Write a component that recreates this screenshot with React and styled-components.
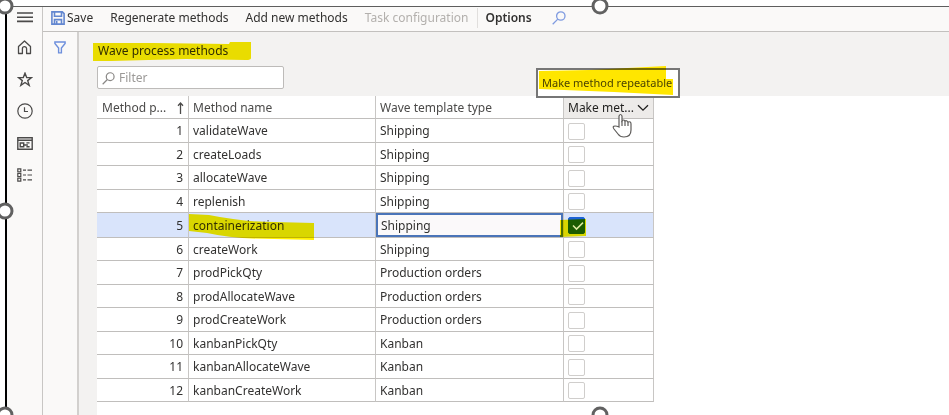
import React from "react";
import styled, { createGlobalStyle, css } from "styled-components";

const GlobalStyle = createGlobalStyle`
  *, *::before, *::after { box-sizing: border-box; }
  body {
    margin: 0;
    background: #fff;
    color: #323130;
    font-family: "Noto Sans", "Open Sans", sans-serif;
    font-size: 12px;
    line-height: 16px;
    overflow: hidden;
  }
  button, input { font: inherit; color: inherit; }
`;

const Page = styled.div`
  position: relative;
  display: flex;
  min-height: 100vh;
  padding: 6px 0 0 5px;
`;

const Window = styled.div`
  display: flex;
  flex: 1;
  min-width: 0;
  border-top: 1px solid #5e5e5e;
  border-left: 2px solid #000;
  background: #faf9f8;
`;

const IconButton = styled.button`
  display: flex;
  align-items: center;
  justify-content: center;
  width: 20px;
  height: 20px;
  padding: 0;
  border: 0;
  background: none;
  color: ${(p) => p.$color || "#4b4a49"};
`;

const NavRail = styled.nav`
  display: flex;
  flex-direction: column;
  align-items: center;
  gap: 12px;
  width: 36px;
  border-right: 1px solid #c8c6c4;

  button:first-child { margin-bottom: -2px; }
`;

const Workspace = styled.div`
  display: flex;
  flex: 1;
  flex-direction: column;
  min-width: 0;
`;

const Toolbar = styled.header`
  display: flex;
  align-items: center;
  gap: 17px;
  height: 25px;
  padding: 0 8px 2px;
  border-bottom: 1px solid #c2c0be;
`;

const ToolButton = styled.button`
  display: flex;
  align-items: center;
  gap: 2px;
  padding: 0;
  border: 0;
  background: none;
  white-space: nowrap;
  color: #323130;
  font-weight: ${(p) => (p.$strong ? 600 : 400)};

  &:disabled { color: #b3b0ad; }
`;

const OptionsGroup = styled.div`
  display: flex;
  align-items: center;
  gap: 17px;
  margin-left: -8px;
  padding-left: 7px;
  border-left: 1px solid #e1dfdd;
`;

const Body = styled.div`
  display: flex;
  flex: 1;
`;

const FilterRail = styled.aside`
  display: flex;
  justify-content: center;
  align-items: flex-start;
  width: 36px;
  padding-top: 5px;
  border-right: 2px solid #d2d0ce;
`;

const Main = styled.main`
  display: flex;
  flex: 1;
  flex-direction: column;
  min-width: 0;
  padding-left: 18px;
  background: #f3f2f1;
`;

const Heading = styled.div`
  display: flex;
  flex-direction: column;
  align-items: flex-start;
  gap: 7px;
  height: 64px;
  padding-top: 11px;
`;

const Title = styled.h1`
  position: relative;
  margin: 0;
  padding-left: 1px;
  font-size: 12px;
  font-weight: 400;
  line-height: 16px;
`;

const SearchField = styled.label`
  display: flex;
  align-items: center;
  gap: 4px;
  width: 187px;
  height: 23px;
  padding: 1px 4px 0;
  border: 1px solid #bdbbb9;
  border-radius: 2px;
  background: #fff;
  color: #8a8886;

  input {
    flex: 1;
    min-width: 0;
    padding: 0;
    border: 0;
    outline: 0;
    background: none;
  }
  input::placeholder { color: #9b9997; opacity: 1; }
`;

const GridArea = styled.section`
  flex: 1;
  background: #fff;
`;

const Table = styled.table`
  width: 557px;
  table-layout: fixed;
  border-collapse: separate;
  border-spacing: 0;
`;

const Col = styled.col`
  width: ${(p) => p.$width}px;
`;

const cell = css`
  position: relative;
  padding: 1px 4px 0;
  border-right: 1px solid #c8c6c4;
  border-bottom: 1px solid #c0bebc;
  text-align: left;
  font-weight: 400;
  white-space: nowrap;
`;

const HeadCell = styled.th`
  ${cell}
  height: 23px;
  padding-left: ${(p) => (p.$inset ? 5 : 4)}px;
  background: ${(p) => (p.$active ? "#edebe9" : "#fff")};
  color: ${(p) => (p.$active ? "#201f1e" : "#4b4a49")};
`;

const HeadLabel = styled.div`
  display: flex;
  align-items: center;
  justify-content: space-between;
`;

const Row = styled.tr`
  height: 24px;
  background: ${(p) => (p.$selected ? "#d9e4fb" : "#fff")};
  &:nth-child(even) { height: 23px; }
  ${(p) => p.$selected && "&& { height: 25px; }"}
`;

const Cell = styled.td`
  ${cell}
  text-align: ${(p) => p.$align || "left"};
  ${(p) => p.$align === "right" && "padding-right: 5px;"}
  ${(p) =>
    p.$focused &&
    css`
      padding-left: 5px;
      background: #fbf9fa;
      box-shadow: inset 0 0 0 2px #4a74b8;
    `}
`;

const Check = styled.input`
  display: block;
  appearance: none;
  width: 17px;
  height: 17px;
  margin: 0;
  border: 1px solid #d0cecc;
  border-radius: 2px;
  background: #fff;

  &:checked {
    border-color: #1c62d6;
    background: #1c62d6;
  }
`;

const CheckMark = styled.svg`
  position: absolute;
  z-index: 3;
  left: 8px;
  top: 8px;
  pointer-events: none;
`;

const Marker = styled.svg`
  position: absolute;
  z-index: 2;
  left: ${(p) => p.$left}px;
  top: ${(p) => p.$top}px;
  mix-blend-mode: multiply;
  pointer-events: none;
`;

const Tooltip = styled.div`
  position: absolute;
  z-index: 4;
  left: -28px;
  bottom: 20px;
  padding: 5px 6px 5px 4px;
  border: 2px solid #767676;
  background: #fff;
  color: #4b4a49;
  font-size: 11px;
  line-height: 16px;
  isolation: isolate;
`;

const Cursor = styled.svg`
  position: absolute;
  z-index: 5;
  left: 48px;
  top: 17px;
`;

const Handle = styled.span`
  position: absolute;
  z-index: 6;
  left: ${(p) => p.$x};
  top: ${(p) => p.$y};
  width: 17px;
  height: 17px;
  border: 3px solid #616161;
  border-radius: 50%;
  background: #fff;
  transform: translate(-50%, -50%);
`;

const stroke = { fill: "none", stroke: "currentColor", strokeWidth: 1.2 };

const MenuIcon = () => (
  <svg width="16" height="12" viewBox="0 0 16 12" {...stroke} strokeWidth="1.6">
    <path d="M0 2h16M0 6.2h16M0 10.4h16" />
  </svg>
);
const HomeIcon = () => (
  <svg width="15" height="15" viewBox="0 0 15 15" {...stroke} strokeWidth="1.3">
    <path d="M1.5 6.6 7.5 1l6 5.6v6.9H9.6V8.8a2.1 2.1 0 0 0-4.2 0v4.7H1.5z" strokeLinejoin="round" />
  </svg>
);
const StarIcon = () => (
  <svg width="16" height="15" viewBox="0 0 16 15" {...stroke} strokeWidth="1.4">
    <path d="m8 1.2 1.7 4.4h4.8l-3.8 3 1.5 4.8L8 10.5l-4.2 2.9 1.5-4.8-3.8-3h4.8z" />
  </svg>
);
const ClockIcon = () => (
  <svg width="16" height="16" viewBox="0 0 16 16" {...stroke}>
    <circle cx="8" cy="8" r="7.2" />
    <path d="M7.5 4.3v4.2H11" />
  </svg>
);
const WorkspaceIcon = () => (
  <svg width="16" height="13" viewBox="0 0 16 13" {...stroke} strokeWidth="1.4">
    <path d="M.8.8h14.4v11.4H.8zM1 3.2h14M3.2 6h3.5v3.8H3.2zM12.6 5.9H9.4M6.7 8h4.2M12.6 9.8H9.4" />
  </svg>
);
const ModulesIcon = () => (
  <svg width="15" height="14" viewBox="0 0 15 14" {...stroke}>
    <path d="M.8.8h3v3h-3zM.8 5.5h3v3h-3zM.8 10.2h3v3h-3z" />
    <path d="M6 2.2h3M10.5 2.2H15M6 7h3M10.5 7H15M6 11.8h3M10.5 11.8H15" />
  </svg>
);
const SaveIcon = () => (
  <svg width="14" height="14" viewBox="0 0 14 14" fill="none" stroke="#6387d0" strokeWidth="1.6">
    <path d="M.9.9h10.4l1.8 1.8v10.4H.9zM3.5 1v4.3h7V1M3.5 13V8.6h7V13" />
    <path d="M5.7 10v3" />
  </svg>
);
const SearchIcon = ({ size = 13 }) => (
  <svg width={size} height={size} viewBox="0 0 14 14" {...stroke} strokeWidth="1.3">
    <circle cx="8.8" cy="5" r="4.2" />
    <path d="M5.8 8.1.7 13.2" />
  </svg>
);
const FunnelIcon = () => (
  <svg width="12" height="13" viewBox="0 0 12 13" {...stroke} strokeWidth="1.4">
    <path d="M.9 1h10.2v1.5L7.4 7v4.9H4.6V7L.9 2.5z" />
  </svg>
);
const SortArrow = () => (
  <svg width="7" height="12" viewBox="0 0 7 12" {...stroke} strokeWidth="1.3">
    <path d="M3.5 12V1M1 3.7 3.5 1 6 3.7" />
  </svg>
);
const Chevron = () => (
  <svg width="12" height="8" viewBox="0 0 12 8" {...stroke} strokeWidth="1.3">
    <path d="m1 1.2 5 5 5-5" />
  </svg>
);

const navItems = [
  ["Menu", MenuIcon],
  ["Home", HomeIcon],
  ["Favorites", StarIcon],
  ["Recent", ClockIcon],
  ["Workspaces", WorkspaceIcon],
  ["Modules", ModulesIcon],
];

const methods = [
  ["validateWave", "Shipping"],
  ["createLoads", "Shipping"],
  ["allocateWave", "Shipping"],
  ["replenish", "Shipping"],
  ["containerization", "Shipping"],
  ["createWork", "Shipping"],
  ["prodPickQty", "Production orders"],
  ["prodAllocateWave", "Production orders"],
  ["prodCreateWork", "Production orders"],
  ["kanbanPickQty", "Kanban"],
  ["kanbanAllocateWave", "Kanban"],
  ["kanbanCreateWork", "Kanban"],
];

function MethodRow({ index, name, type }) {
  const selected = index === 5;
  return (
    <Row $selected={selected}>
      <Cell $align="right">{index}</Cell>
      <Cell>
        {name}
        {selected && (
          <Marker $left={0} $top={0} width="126" height="28" viewBox="0 0 126 28">
            <path d="M0 1 20 2q35 7 65 7l40 1v17l-40-1Q45 26 18 20L0 18z" fill="#fff000" />
          </Marker>
        )}
      </Cell>
      <Cell $focused={selected}>{type}</Cell>
      <Cell>
        <Check type="checkbox" defaultChecked={selected} aria-label={`Make ${name} repeatable`} />
        {selected && (
          <>
            <Marker $left={-4} $top={6} width="27" height="18" viewBox="0 0 27 18">
              <path d="M0 1 26 0v17L0 18z" fill="#fff000" />
            </Marker>
            <CheckMark width="12" height="10" viewBox="0 0 12 10" fill="none" stroke="#dfe9a0" strokeWidth="1.5">
              <path d="m1 4.5 3.5 3.6L11 1.6" />
            </CheckMark>
          </>
        )}
      </Cell>
    </Row>
  );
}

export default function App() {
  return (
    <>
      <GlobalStyle />
      <Page>
        <Window>
          <NavRail>
            {navItems.map(([label, Icon]) => (
              <IconButton key={label} aria-label={label}>
                <Icon />
              </IconButton>
            ))}
          </NavRail>
          <Workspace>
            <Toolbar>
              <ToolButton><SaveIcon />Save</ToolButton>
              <ToolButton>Regenerate methods</ToolButton>
              <ToolButton>Add new methods</ToolButton>
              <ToolButton disabled>Task configuration</ToolButton>
              <OptionsGroup>
                <ToolButton $strong>Options</ToolButton>
                <IconButton $color="#7f9be0" aria-label="Search">
                  <SearchIcon size={14} />
                </IconButton>
              </OptionsGroup>
            </Toolbar>
            <Body>
              <FilterRail>
                <IconButton $color="#6d8fdc" aria-label="Show filters">
                  <FunnelIcon />
                </IconButton>
              </FilterRail>
              <Main>
                <Heading>
                  <Title>
                    Wave process methods
                    <Marker $left={-4} $top={-1} width="160" height="19" viewBox="0 0 160 19">
                      <path d="M0 1h60l76 1 1-2h21v16q0 2-5 2l-60-1-75 2H0z" fill="#f5e800" />
                    </Marker>
                  </Title>
                  <SearchField>
                    <SearchIcon />
                    <input type="text" placeholder="Filter" aria-label="Filter" />
                  </SearchField>
                </Heading>
                <GridArea>
                  <Table>
                    <colgroup>
                      <Col $width={92} />
                      <Col $width={187} />
                      <Col $width={188} />
                      <Col $width={90} />
                    </colgroup>
                    <thead>
                      <tr>
                        <HeadCell $inset>
                          <HeadLabel>Method p... <SortArrow /></HeadLabel>
                        </HeadCell>
                        <HeadCell>Method name</HeadCell>
                        <HeadCell>Wave template type</HeadCell>
                        <HeadCell $active>
                          <HeadLabel>Make met... <Chevron /></HeadLabel>
                          <Tooltip role="tooltip">
                            Make method repeatable
                            <Marker $left={1} $top={-4} width="136" height="29" viewBox="0 0 136 29">
                              <path d="M0 5 50 4l77-4v13h7v16L75 26 0 23z" fill="#ffe600" />
                            </Marker>
                          </Tooltip>
                          <Cursor width="22" height="26" viewBox="0 0 22 26" fill="#fff" stroke="#5e5c5a" strokeWidth="1.2">
                            <path d="M7 14V3q1.500-3 3 0v5q1.500-2 3 0 1.500-1 3 1 3-1 3 2v6q0 7-7 7-4 0-6-3l-4-5q-2-3 1-3 2 0 4 1z" />
                            <path d="M10 8v5M13 8v5M16 9v4" />
                          </Cursor>
                        </HeadCell>
                      </tr>
                    </thead>
                    <tbody>
                      {methods.map(([name, type], i) => (
                        <MethodRow key={name} index={i + 1} name={name} type={type} />
                      ))}
                    </tbody>
                  </Table>
                </GridArea>
              </Main>
            </Body>
          </Workspace>
        </Window>
        <Handle $x="5px" $y="6px" />
        <Handle $x="600px" $y="6px" />
        <Handle $x="5px" $y="211px" />
        <Handle $x="5px" $y="100%" />
        <Handle $x="600px" $y="100%" />
      </Page>
    </>
  );
}
